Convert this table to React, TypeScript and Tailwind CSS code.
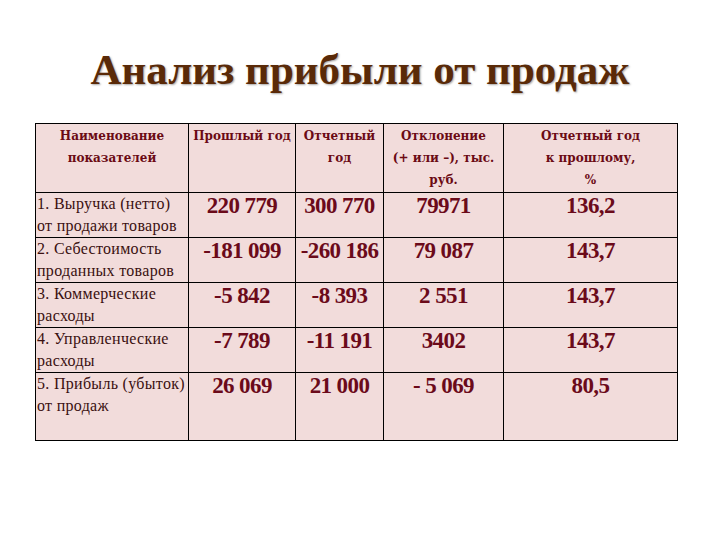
import React from "react";

const rows: [React.ReactNode, string, string, string, string][] = [
  [<>1. Выручка (нетто)<br />от продажи товаров</>, "220 779", "300 770", "79971", "136,2"],
  [<>2. Себестоимость<br />проданных товаров</>, "-181 099", "-260 186", "79 087", "143,7"],
  [<>3. Коммерческие<br />расходы</>, "-5 842", "-8 393", "2 551", "143,7"],
  [<>4. Управленческие<br />расходы</>, "-7 789", "-11 191", "3402", "143,7"],
  [<>5. Прибыль (убыток)<br />от продаж</>, "26 069", "21 000", "- 5 069", "80,5"],
];
const heights = ["h-[42px]", "h-[44px]", "h-[43px]", "h-[45px]", "h-[68px]"];

export default function App() {
  return (
    <div className="w-[720px] h-[540px] bg-white flex flex-col items-center font-['Liberation_Serif']">
      <h1 className="mt-[42px] h-[81px] text-[43px] leading-[56px] font-bold text-[#5a2a08] [text-shadow:1px_1px_2px_rgba(0,0,0,0.35)] font-['Liberation_Serif']">
        Анализ прибыли от продаж
      </h1>
      <table className="ml-[-7px] border-collapse border border-black bg-[#f2dcdb] table-fixed w-[642px]">
        <colgroup>
          <col className="w-[153px]" />
          <col className="w-[107px]" />
          <col className="w-[88px]" />
          <col className="w-[120px]" />
          <col className="w-[174px]" />
        </colgroup>
        <thead>
          <tr className="h-[69px] align-top text-[12px] leading-[22px] font-bold text-[#6b0a14] font-['DejaVu_Serif']">
            <th className="border border-black px-0 pt-[1px] text-center font-bold">Наименование<br />показателей</th>
            <th className="border border-black px-0 pt-[1px] text-center font-bold whitespace-nowrap">Прошлый год</th>
            <th className="border border-black px-0 pt-[1px] text-center font-bold">Отчетный<br />год</th>
            <th className="border border-black px-0 pt-[1px] text-center font-bold whitespace-nowrap">Отклонение<br />(+ или –), тыс.<br />руб.</th>
            <th className="border border-black px-0 pt-[1px] text-center font-bold">Отчетный год<br />к прошлому,<br />%</th>
          </tr>
        </thead>
        <tbody>
          {rows.map((r, i) => (
            <tr key={i} className={`${heights[i]} align-top`}>
              <td className="border border-black pl-[1px] pr-0 pt-0 text-[16px] leading-[22px] tracking-[0.3px] text-[#3a1010] whitespace-nowrap">{r[0]}</td>
              {r.slice(1).map((v, j) => (
                <td key={j} className="border border-black text-center pt-0 text-[23px] leading-[26px] font-bold text-[#6b0a1a] tracking-[-0.6px]">
                  {v}
                </td>
              ))}
            </tr>
          ))}
        </tbody>
      </table>
    </div>
  );
}
